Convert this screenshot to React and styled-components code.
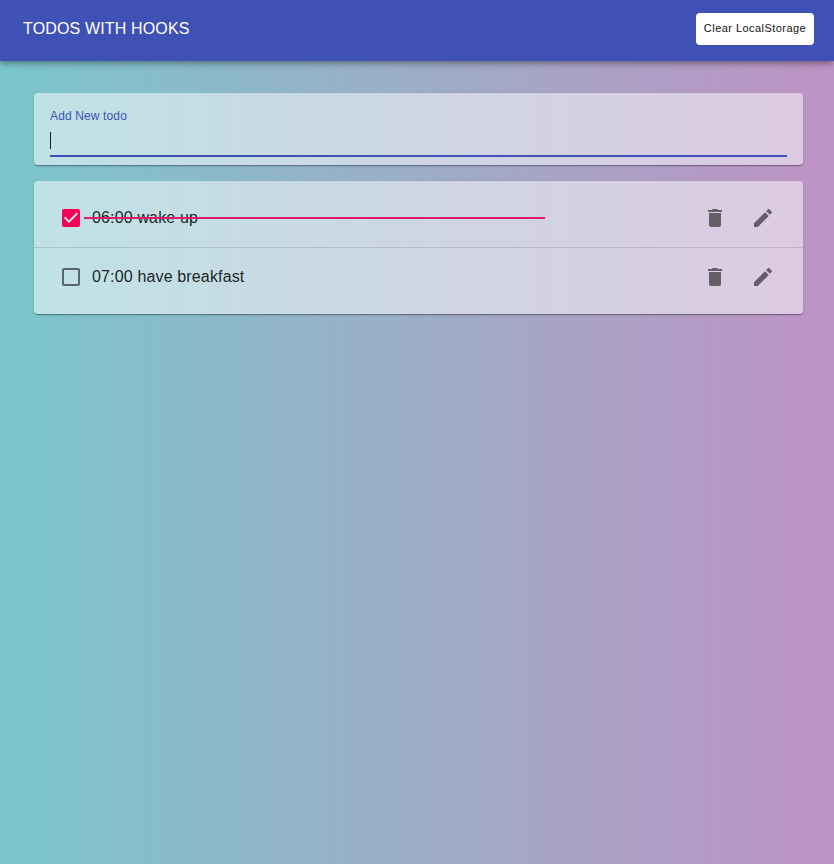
import React, { useState } from "react";
import styled, { createGlobalStyle } from "styled-components";

const GlobalStyle = createGlobalStyle`
  *, *::before, *::after { box-sizing: border-box; }
  body {
    margin: 0;
    font-family: "Liberation Sans", Arial, sans-serif;
    color: rgba(0, 0, 0, 0.87);
  }
`;

const Page = styled.div`
  min-height: 100vh;
  background: linear-gradient(to right, #7bc6cc, #be93c5);
`;

const AppBar = styled.header`
  display: flex;
  align-items: flex-start;
  justify-content: space-between;
  height: 61px;
  padding: 13px 20px 0 23px;
  background: #3f51b5;
  color: #fff;
  box-shadow: 0 2px 4px -1px rgba(0, 0, 0, 0.2), 0 4px 5px 0 rgba(0, 0, 0, 0.14),
    0 1px 10px 0 rgba(0, 0, 0, 0.12);
`;

const Title = styled.h1`
  margin: 4px 0 0;
  font-size: 16px;
  font-weight: 400;
  line-height: 24px;
  letter-spacing: 0.15px;
`;

const ClearButton = styled.button`
  width: 118px;
  height: 32px;
  padding: 0 0 2px;
  border: 0;
  border-radius: 4px;
  background: #fff;
  color: #111;
  font-family: inherit;
  font-size: 11px;
  letter-spacing: 0.45px;
  white-space: nowrap;
`;

const Content = styled.main`
  display: flex;
  flex-direction: column;
  gap: 16px;
  padding: 32px 31px 0 34px;
`;

const Paper = styled.section`
  border-radius: 4px;
  background: rgba(255, 255, 255, 0.5);
  box-shadow: 0 2px 1px -1px rgba(0, 0, 0, 0.2), 0 1px 1px 0 rgba(0, 0, 0, 0.14),
    0 1px 3px 0 rgba(0, 0, 0, 0.12);
`;

const FormPaper = styled(Paper)`
  height: 72px;
  padding: 16px 16px 8px;
`;

const Field = styled.label`
  display: flex;
  flex-direction: column;
  height: 48px;
  border-bottom: 2px solid #3f51b5;
`;

const FieldLabel = styled.span`
  color: #3f51b5;
  font-size: 12px;
  line-height: 14px;
  letter-spacing: 0.13px;
`;

const FieldInput = styled.span`
  width: 1px;
  height: 17px;
  margin-top: 9px;
  background: rgba(0, 0, 0, 0.87);
`;

const ListPaper = styled(Paper)`
  padding: 8px 0;
`;

const Item = styled.div`
  display: flex;
  align-items: center;
  height: ${(p) => (p.$divided ? 59 : 58)}px;
  padding: 0 28px 0 25px;
  border-bottom: ${(p) => (p.$divided ? "1px solid rgba(0, 0, 0, 0.12)" : "0")};
`;

const IconButton = styled.button`
  display: flex;
  padding: 0;
  border: 0;
  background: none;
  color: ${(p) => (p.$checked ? "#f50057" : "rgba(0, 0, 0, 0.54)")};
`;

const Icon = styled.svg`
  width: 24px;
  height: 24px;
  fill: currentColor;
`;

const ItemText = styled.span`
  position: relative;
  width: 461px;
  margin-left: 1px;
  padding-left: 8px;
  font-size: 16px;
  line-height: 24px;
  letter-spacing: 0.15px;
`;

const Strike = styled.span`
  position: absolute;
  left: 0;
  right: 0;
  top: 11px;
  height: 2px;
  background: #dd1c6c;
`;

const Actions = styled.div`
  display: flex;
  gap: 24px;
  margin-left: auto;
`;

const CHECKED =
  "M19 3H5c-1.11 0-2 .9-2 2v14c0 1.1.89 2 2 2h14c1.11 0 2-.9 2-2V5c0-1.1-.89-2-2-2zm-9 14l-5-5 1.41-1.41L10 14.17l7.59-7.59L19 8l-9 9z";
const UNCHECKED =
  "M19 5v14H5V5h14m0-2H5c-1.1 0-2 .9-2 2v14c0 1.1.9 2 2 2h14c1.1 0 2-.9 2-2V5c0-1.1-.9-2-2-2z";
const TRASH = "M6 19c0 1.1.9 2 2 2h8c1.1 0 2-.9 2-2V7H6v12zM19 4h-3.5l-1-1h-5l-1 1H5v2h14V4z";
const PENCIL =
  "M3 17.25V21h3.75L17.81 9.94l-3.75-3.75L3 17.25zM20.71 7.04c.39-.39.39-1.02 0-1.41l-2.34-2.34c-.39-.39-1.02-.39-1.41 0l-1.83 1.83 3.75 3.75 1.83-1.83z";

function Glyph({ path }) {
  return (
    <Icon viewBox="0 0 24 24" aria-hidden="true">
      <path d={path} />
    </Icon>
  );
}

function TodoItem({ todo, divided, onToggle, onDelete }) {
  return (
    <Item $divided={divided}>
      <IconButton
        role="checkbox"
        aria-checked={todo.done}
        aria-label={todo.text}
        $checked={todo.done}
        onClick={onToggle}
      >
        <Glyph path={todo.done ? CHECKED : UNCHECKED} />
      </IconButton>
      <ItemText>
        {todo.text}
        {todo.done && <Strike />}
      </ItemText>
      <Actions>
        <IconButton aria-label="Delete" onClick={onDelete}>
          <Glyph path={TRASH} />
        </IconButton>
        <IconButton aria-label="Edit">
          <Glyph path={PENCIL} />
        </IconButton>
      </Actions>
    </Item>
  );
}

export default function App() {
  const [todos, setTodos] = useState([
    { id: 1, text: "06:00 wake up", done: true },
    { id: 2, text: "07:00 have breakfast", done: false },
  ]);
  const toggle = (id) =>
    setTodos(todos.map((t) => (t.id === id ? { ...t, done: !t.done } : t)));
  const remove = (id) => setTodos(todos.filter((t) => t.id !== id));

  return (
    <Page>
      <GlobalStyle />
      <AppBar>
        <Title>TODOS WITH HOOKS</Title>
        <ClearButton onClick={() => setTodos([])}>Clear LocalStorage</ClearButton>
      </AppBar>
      <Content>
        <FormPaper>
          <Field>
            <FieldLabel>Add New todo</FieldLabel>
            <FieldInput />
          </Field>
        </FormPaper>
        {todos.length > 0 && (
          <ListPaper>
            {todos.map((todo, i) => (
              <TodoItem
                key={todo.id}
                todo={todo}
                divided={i < todos.length - 1}
                onToggle={() => toggle(todo.id)}
                onDelete={() => remove(todo.id)}
              />
            ))}
          </ListPaper>
        )}
      </Content>
    </Page>
  );
}
